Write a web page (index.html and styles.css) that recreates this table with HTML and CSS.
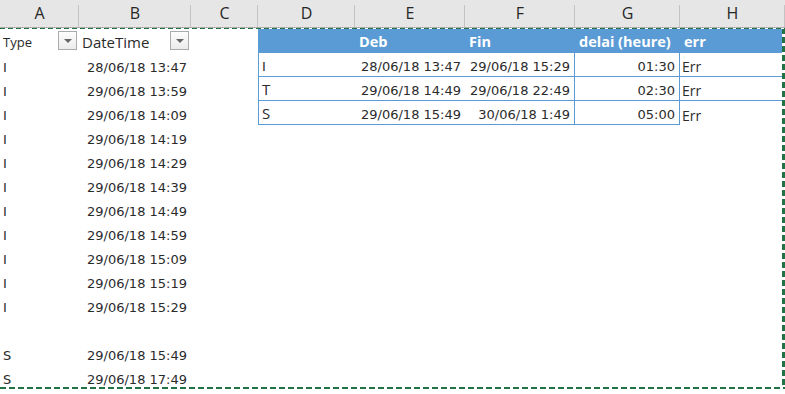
FILE: index.html
```html
<!DOCTYPE html>
<html lang="fr">
<head>
    <meta charset="UTF-8">
    <meta name="viewport" content="width=device-width, initial-scale=1.0">
    <title>Classeur - Feuil1</title>
    <link rel="stylesheet" href="styles.css">
</head>
<body>

    <div class="sheet">
        <div class="col-heads">
            <div class="ch">A</div>
            <div class="ch">B</div>
            <div class="ch">C</div>
            <div class="ch">D</div>
            <div class="ch">E</div>
            <div class="ch">F</div>
            <div class="ch">G</div>
            <div class="ch">H</div>
        </div>

        <div class="grid">
            <!-- ligne 1 : en-tetes -->
            <div class="c head">Type <span class="filter"></span></div>
            <div class="c head big">DateTime <span class="filter"></span></div>
            <div class="c"></div>
            <div class="c th bl"></div>
            <div class="c th">Deb</div>
            <div class="c th">Fin</div>
            <div class="c th">delai (heure)</div>
            <div class="c th">err</div>

            <!-- ligne 2 -->
            <div class="c txt">I</div>
            <div class="c num">28/06/18 13:47</div>
            <div class="c"></div>
            <div class="c txt tb bl">I</div>
            <div class="c num tb">28/06/18 13:47</div>
            <div class="c num tb br">29/06/18 15:29</div>
            <div class="c num tb br">01:30</div>
            <div class="c lbl tb">Err</div>

            <!-- ligne 3 -->
            <div class="c txt">I</div>
            <div class="c num">29/06/18 13:59</div>
            <div class="c"></div>
            <div class="c code tb bl">T</div>
            <div class="c num tb">29/06/18 14:49</div>
            <div class="c num tb br">29/06/18 22:49</div>
            <div class="c num tb br">02:30</div>
            <div class="c lbl tb">Err</div>

            <!-- ligne 4 -->
            <div class="c txt">I</div>
            <div class="c num">29/06/18 14:09</div>
            <div class="c"></div>
            <div class="c code tb bl">S</div>
            <div class="c num tb">29/06/18 15:49</div>
            <div class="c num tb br">30/06/18 1:49</div>
            <div class="c num tb br">05:00</div>
            <div class="c lbl">Err</div>

            <div class="c txt">I</div><div class="c num">29/06/18 14:19</div><div class="c rest"></div>
            <div class="c txt">I</div><div class="c num">29/06/18 14:29</div><div class="c rest"></div>
            <div class="c txt">I</div><div class="c num">29/06/18 14:39</div><div class="c rest"></div>
            <div class="c txt">I</div><div class="c num">29/06/18 14:49</div><div class="c rest"></div>
            <div class="c txt">I</div><div class="c num">29/06/18 14:59</div><div class="c rest"></div>
            <div class="c txt">I</div><div class="c num">29/06/18 15:09</div><div class="c rest"></div>
            <div class="c txt">I</div><div class="c num">29/06/18 15:19</div><div class="c rest"></div>
            <div class="c txt">I</div><div class="c num">29/06/18 15:29</div><div class="c rest"></div>
            <div class="c txt"></div><div class="c num"></div><div class="c rest"></div>
            <div class="c txt">S</div><div class="c num">29/06/18 15:49</div><div class="c rest"></div>
            <div class="c txt">S</div><div class="c num">29/06/18 17:49</div><div class="c rest"></div>
        </div>

        <!-- zone copiee (bordure pointillee) -->
        <div class="marquee"></div>
    </div>

</body>
</html>
```

FILE: styles.css
```css
body {
    margin: 0;
    background: #fff;
    color: #2b2b2b;
    font-family: "DejaVu Sans", Verdana, sans-serif;
    overflow: hidden;
}
.sheet {
    position: relative;
    width: 785px;
    height: 394px;
}

/* Column letters */
.col-heads {
    display: grid;
    grid-template-columns: 79px 112px 67px 97px 110px 110px 105px 105px;
    height: 28px;
    background: #e6e6e6;
    border-bottom: 1px solid #ababab;
    box-sizing: border-box;
}
.ch {
    font-family: "Open Sans", sans-serif;
    font-size: 16px;
    color: #262626;
    text-align: center;
    line-height: 27px;
    background: linear-gradient(#c3c3c3, #c3c3c3) right 5px / 1px 100% no-repeat;
}

/* Cells */
.grid {
    display: grid;
    grid-template-columns: 79px 112px 67px 97px 110px 110px 105px 105px;
    grid-auto-rows: 24px;
    padding-top: 1px;
}
.c {
    display: flex;
    align-items: flex-end;
    box-sizing: border-box;
    padding: 0 3px 2px;
    font-size: 13px;
    white-space: nowrap;
    overflow: hidden;
}
.rest {
    grid-column: 3 / 9;
}
.num {
    justify-content: flex-end;
    padding-right: 4px;
}
.head {
    font-family: "Open Sans", sans-serif;
    font-size: 13px;
    justify-content: space-between;
    padding-right: 2px;
}
.head.big {
    font-size: 15px;
    padding-bottom: 1px;
}
.code {
    font-family: "Open Sans", sans-serif;
    font-size: 15px;
    padding-bottom: 1px;
}
.lbl {
    font-family: "Open Sans", sans-serif;
    font-size: 14px;
    padding-left: 2px;
    padding-bottom: 0;
}

/* Filter dropdown */
.filter {
    align-self: flex-start;
    margin-top: 2px;
    width: 19px;
    height: 19px;
    box-sizing: border-box;
    border: 1px solid #ababab;
    background: linear-gradient(#fdfdfd, #ececec);
    display: flex;
    align-items: center;
    justify-content: center;
}
.filter::after {
    content: "";
    border-left: 4px solid transparent;
    border-right: 4px solid transparent;
    border-top: 4px solid #666;
}

/* Recap table */
.th {
    background: #5b9bd5;
    color: #fff;
    font-family: "Open Sans", sans-serif;
    font-weight: bold;
    font-size: 14.5px;
    padding-left: 4px;
}
.tb { border-bottom: 1px solid #5b9bd5; }
.bl { border-left: 1px solid #5b9bd5; }
.br { border-right: 1px solid #5b9bd5; }

/* Copy marquee round A1:H15 */
.marquee {
    position: absolute;
    left: 0;
    top: 28px;
    width: 785px;
    height: 361px;
    pointer-events: none;
    background:
        repeating-linear-gradient(90deg, #217346 0 5px, #fff 5px 8px) left top / 100% 1px no-repeat,
        repeating-linear-gradient(90deg, #217346 0 6px, #fff 6px 9px) left bottom / 100% 2px no-repeat,
        repeating-linear-gradient(180deg, #217346 0 6px, #fff 6px 9px) right top / 3px 100% no-repeat;
}
```
